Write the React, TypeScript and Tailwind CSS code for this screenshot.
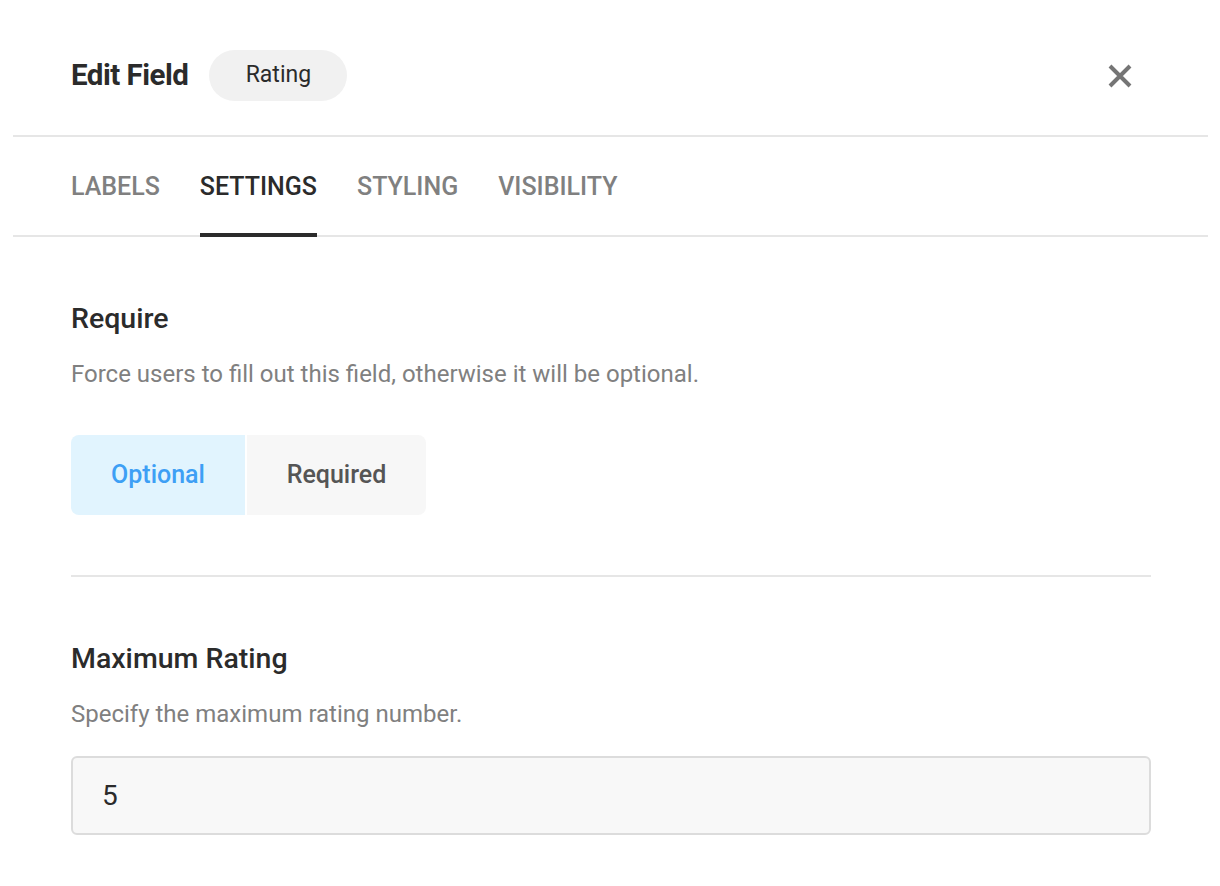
export default function App() {
  return (
    <div className="w-[1220px] h-[886px] bg-white overflow-hidden" style={{ fontFamily: "Roboto, sans-serif" }}>
      <div className="mx-[13px] w-[1195px]">
        <div className="h-[137px] border-b-2 border-[#e6e6e6] flex items-center pl-[58px] pr-[76px] pt-[16px]">
          <span className="text-[29.5px] font-bold text-[#2b2b2b] tracking-[-0.5px]">Edit Field</span>
          <span className="ml-[21px] h-[51px] w-[138px] rounded-full bg-[#f1f1f1] flex items-center justify-center text-[23px] text-[#2b2b2b]">Rating</span>
          <svg className="ml-auto" width="24" height="24" viewBox="0 0 24 24">
            <path d="M2 2L22 22M22 2L2 22" stroke="#757575" strokeWidth="4" strokeLinecap="butt" />
          </svg>
        </div>
        <div className="h-[100px] border-b-2 border-[#e6e6e6] flex items-stretch pl-[58px] gap-[40px] text-[25px] uppercase">
          <span className="flex items-center text-[#808080] font-medium pt-[2px]">Labels</span>
          <span className="flex items-center text-[#2b2b2b] font-medium border-b-4 border-[#2b2b2b] -mb-[2px] pt-[4px]">Settings</span>
          <span className="flex items-center text-[#808080] font-medium pt-[2px]">Styling</span>
          <span className="flex items-center text-[#808080] font-medium pt-[2px]">Visibility</span>
        </div>
      </div>
      <div className="mx-[71px] w-[1080px]">
        <div className="pt-[64px] pb-[60px] border-b-2 border-[#e6e6e6]">
          <div className="text-[28.5px] font-medium text-[#2b2b2b] leading-[36px]">Require</div>
          <div className="mt-[22px] text-[24px] text-[#808080] leading-[30px]">Force users to fill out this field, otherwise it will be optional.</div>
          <div className="mt-[46px] flex gap-[2px]">
            <div className="w-[174px] h-[80px] rounded-l-[8px] bg-[#e1f4fe] text-[#3d9ff5] flex items-center justify-center text-[25px] font-medium">Optional</div>
            <div className="w-[179px] h-[80px] rounded-r-[8px] bg-[#f7f7f7] text-[#555] flex items-center justify-center text-[25px] font-medium">Required</div>
          </div>
        </div>
        <div className="pt-[64px]">
          <div className="text-[28.5px] font-medium text-[#2b2b2b] leading-[36px]">Maximum Rating</div>
          <div className="mt-[22px] text-[24px] text-[#808080] leading-[30px]">Specify the maximum rating number.</div>
          <div className="mt-[27px] h-[79px] rounded-[6px] border-2 border-[#dcdcdc] bg-[#f8f8f8] flex items-center pl-[29px] text-[28px] text-[#2b2b2b]">5</div>
        </div>
      </div>
    </div>
  );
}
